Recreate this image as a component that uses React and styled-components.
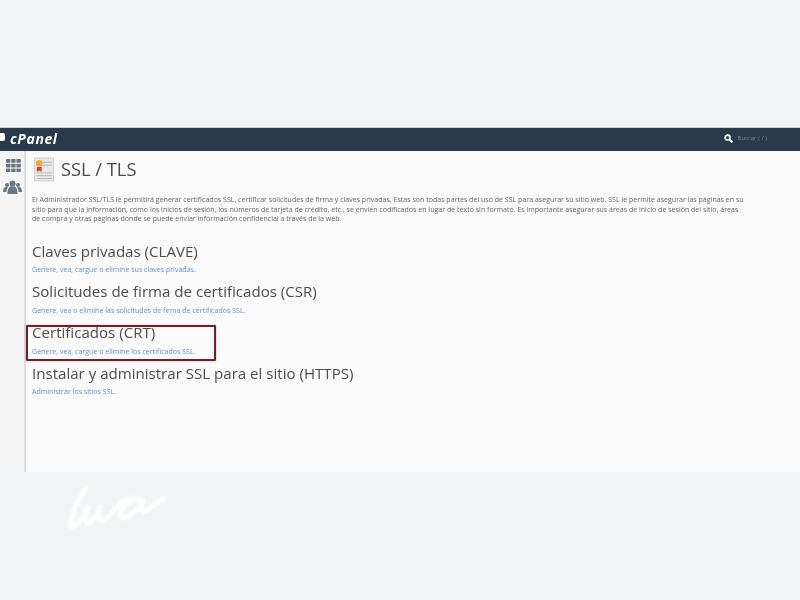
import React from "react";
import styled, { createGlobalStyle } from "styled-components";

const Global = createGlobalStyle`
  html, body { margin: 0; padding: 0; background: #f1f3f5; }
  body { font-family: "Open Sans", "Liberation Sans", sans-serif; }
`;
const Page = styled.div`
  width: 800px; height: 600px; overflow: hidden; display: flex; flex-direction: column;
  background: #f1f3f5;
`;
const TopSpace = styled.div`height: 127px; flex: none;`;
const Shot = styled.div`
  height: 345px; flex: none; display: flex; flex-direction: column; filter: blur(0.4px);
  background: #fafafa;
`;
const Header = styled.header`
  height: 24px; flex: none; background: #293a4a; display: flex; align-items: center;
  justify-content: space-between; border-top: 1px solid #c9ced3; box-sizing: border-box;
`;
const Logo = styled.div`
  display: flex; align-items: center; gap: 5px; margin: -3px 0 0 -3px; color: #fff;
  font: italic 700 14px "Open Sans", sans-serif; letter-spacing: 0.6px;
`;
const LogoDot = styled.span`width: 8px; height: 8px; border-radius: 2px; background: #fff; margin-top: -3px;`;
const Search = styled.div`
  display: flex; align-items: center; gap: 5px; margin: -3px 33px 0 0; color: #7d8a97; font-size: 6px;
`;
const Body = styled.div`flex: 1; display: flex; min-height: 0;`;
const Side = styled.nav`
  width: 24px; flex: none; background: #f5f5f5; border-right: 2px solid #dcdcdc; display: flex;
  flex-direction: column; align-items: center; gap: 12px; padding-top: 4px; color: #6b7680;
`;
const GridWrap = styled.span`display: block; height: 13px; margin-left: 2px;`;
const Main = styled.main`flex: 1; padding: 5px 0 0 8px; color: #555;`;
const TitleRow = styled.div`display: flex; align-items: center; gap: 7px; height: 26px;`;
const Title = styled.h1`margin: 0; font-size: 18.3px; line-height: 26px; font-weight: 400; color: #4a4a4a;`;
const Intro = styled.p`
  margin: 13px 0 0 -2px; width: 714px; font-size: 7.05px; line-height: 9.6px; color: #666;
`;
const Sections = styled.div`margin: 17px 0 0 -2px;`;
const Section = styled.section`
  position: relative; height: 40.67px;
  &:first-of-type { margin-top: 12px; }
`;
const Heading = styled.h2`margin: 0; font-size: 15.08px; line-height: 20px; font-weight: 400; color: #4d4d4d;`;
const Link = styled.a`display: block; margin-top: 3.5px; font-size: 7.07px; line-height: 10px; color: #5f93cf;`;
const Highlight = styled.div`
  position: absolute; left: -6px; top: 2.5px; width: 189.5px; height: 36px;
  border: 2px solid #6d2128; border-radius: 1px; box-sizing: border-box;
  box-shadow: 0 0 2px rgba(109, 33, 40, 0.4);
`;
const Footer = styled.div`
  height: 128px; flex: none; padding: 13px 0 0 65px; background: #f1f3f5;
`;
const LogoMark = styled.svg`filter: blur(0.8px); display: block;`;

const Grid = () => (
  <svg width="15" height="13" viewBox="0 0 15 13" fill="currentColor">
    {[0, 5.2, 10.4].flatMap(x => [0, 4.7, 9.4].map(y => <rect key={x + "-" + y} x={x} y={y} width="4.4" height="3.7" rx="0.6" />))}
  </svg>
);
const Users = () => (
  <svg width="19" height="14" viewBox="0 0 19 14" fill="currentColor">
    <circle cx="4" cy="5" r="2" /><circle cx="15" cy="5" r="2" /><circle cx="9.5" cy="3.6" r="3" />
    <path d="M0 12c0-3 1-5 3-5h2c-1 1-1.500 3-1.500 5zM19 12c0-3-1-5-3-5h-2c1 1 1.500 3 1.500 5zM4.500 14c0-5 1.500-7.500 3.500-7.500h3c2 0 3.500 2.500 3.500 7.500z" />
  </svg>
);
const Cert = () => (
  <svg width="20" height="25" viewBox="0 0 21 25">
    <rect x="0.500" y="0.500" width="20" height="24" fill="#e8e8e6" stroke="#d0d0d0" />
    <path d="M9 5h10M9 8h10M3 16h16M3 19h16M3 22h16" stroke="#b5b5b5" strokeWidth="1" />
    <circle cx="5.500" cy="6" r="3.500" fill="#f0a63c" />
    <path d="M3 10h5v5l-2.500-1.500L3 15z" fill="#c9413a" />
  </svg>
);
const SearchIcon = () => (
  <svg width="9" height="9" viewBox="0 0 8 8" fill="none" stroke="#fff">
    <circle cx="3.200" cy="3.200" r="2.200" strokeWidth="1.400" /><path d="M5 5l2.500 2.500" strokeWidth="1.800" />
  </svg>
);
const LwaLogo = () => (
  <LogoMark width="102" height="50" viewBox="0 0 102 50" fill="none" stroke="#fff" strokeWidth="4.600" strokeLinecap="round" strokeLinejoin="round">
    <path d="M21 3C14 14 6 30 5 40c0 3 3 3 6 0 4-4 8-10 12-18-3 8-4 15-1 16 4 1 9-6 13-16-2 8-1 15 3 14 6-2 11-12 17-18 5-4 17-6 23-3-9-2-21 5-23 13-1 5 4 6 9 3 6-3 10-9 14-14-3 7-2 11 2 9 5-2 10-7 18-12" />
  </LogoMark>
);

const sections = [
  ["Claves privadas (CLAVE)", "Genere, vea, cargue o elimine sus claves privadas."],
  ["Solicitudes de firma de certificados (CSR)", "Genere, vea o elimine las solicitudes de firma de certificados SSL."],
  ["Certificados (CRT)", "Genere, vea, cargue o elimine los certificados SSL.", true],
  ["Instalar y administrar SSL para el sitio (HTTPS)", "Administrar los sitios SSL."],
];

export default function App() {
  return (
    <Page>
      <Global />
      <TopSpace />
      <Shot>
        <Header>
          <Logo><LogoDot />cPanel</Logo>
          <Search><SearchIcon />Buscar ( / )</Search>
        </Header>
        <Body>
          <Side><GridWrap><Grid /></GridWrap><Users /></Side>
          <Main>
            <TitleRow><Cert /><Title>SSL / TLS</Title></TitleRow>
            <Intro>
              El Administrador SSL/TLS le permitirá generar certificados SSL, certificar solicitudes de firma y claves privadas. Estas son todas partes del uso de SSL para asegurar su sitio web. SSL le permite asegurar las páginas en su sitio para que la información, como los inicios de sesión, los números de tarjeta de crédito, etc., se envíen codificados en lugar de texto sin formato. Es importante asegurar sus áreas de inicio de sesión del sitio, áreas de compra y otras páginas donde se puede enviar información confidencial a través de la web.
            </Intro>
            <Sections>
              {sections.map(([h, l, mark]) => (
                <Section key={h}>
                  {mark && <Highlight />}
                  <Heading>{h}</Heading>
                  <Link>{l}</Link>
                </Section>
              ))}
            </Sections>
          </Main>
        </Body>
      </Shot>
      <Footer><LwaLogo /></Footer>
    </Page>
  );
}
